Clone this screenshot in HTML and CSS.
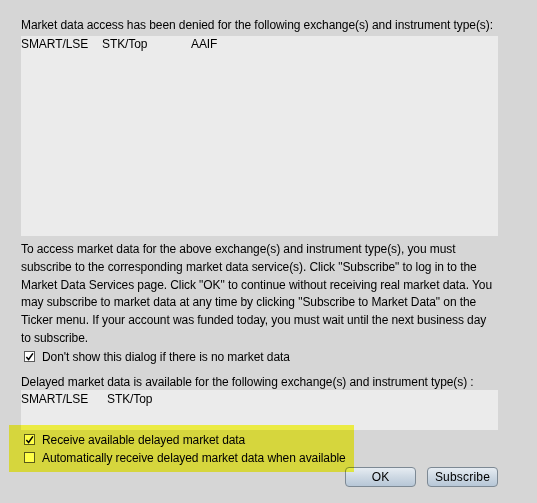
FILE: index.html
```html
<!DOCTYPE html>
<html>
<head>
<meta charset="utf-8">
<link rel="stylesheet" href="styles.css">
</head>
<body>
<div class="dialog">
  <div class="title">Market data access has been denied for the following exchange(s) and instrument type(s):</div>
  <div class="list list-denied">
    <div class="row row3"><span>SMART/LSE</span><span>STK/Top</span><span>AAIF</span></div>
  </div>
  <p class="info">To access market data for the above exchange(s) and instrument type(s), you must<br>subscribe to the corresponding market data service(s). Click "Subscribe" to log in to the<br>Market Data Services page. Click "OK" to continue without receiving real market data. You<br>may subscribe to market data at any time by clicking "Subscribe to Market Data" on the<br>Ticker menu. If your account was funded today, you must wait until the next business day<br>to subscribe.</p>
  <label class="check"><span class="box"><svg viewBox="0 0 10 10" width="10" height="10"><path d="M1.5 5 L4 7.8 L8.8 1" fill="none" stroke="#000" stroke-width="1.7"/></svg></span>Don't show this dialog if there is no market data</label>
  <div class="subtitle">Delayed market data is available for the following exchange(s) and instrument type(s) :</div>
  <div class="list list-delayed">
    <div class="row row2"><span>SMART/LSE</span><span>STK/Top</span></div>
  </div>
  <div class="delayed-opts">
    <label class="check"><span class="box"><svg viewBox="0 0 10 10" width="10" height="10"><path d="M1.5 5 L4 7.8 L8.8 1" fill="none" stroke="#000" stroke-width="1.7"/></svg></span>Receive available delayed market data</label>
    <label class="check"><span class="box"></span>Automatically receive delayed market data when available</label>
  </div>
  <div class="buttons">
    <button class="btn">OK</button>
    <button class="btn">Subscribe</button>
  </div>
  <div class="highlight"></div>
</div>
</body>
</html>
```
FILE: styles.css
```css
html, body {
  margin: 0;
  padding: 0;
  background: #d6d6d6;
}
body {
  font-family: "Liberation Sans", Arial, sans-serif;
  font-size: 12px;
  letter-spacing: -0.08px;
  color: #000;
}
.dialog {
  position: relative;
  width: 537px;
  height: 503px;
  box-sizing: border-box;
  padding: 16px 39px 0 21px;
}
.title {
  line-height: 18px;
  margin-bottom: 2px;
  white-space: nowrap;
}
.list {
  background: #ebebeb;
}
.list-denied {
  height: 200px;
}
.list-delayed {
  height: 39px;
  padding-top: 1px;
}
.row {
  display: grid;
  line-height: 16px;
}
.row3 {
  grid-template-columns: 81px 89px auto;
}
.row2 {
  grid-template-columns: 86px auto;
}
.info {
  margin: 5px 0 0;
  line-height: 17.8px;
  white-space: nowrap;
}
.check {
  display: flex;
  align-items: center;
  height: 18px;
  padding-left: 3px;
  white-space: nowrap;
}
.box {
  width: 9px;
  height: 9px;
  border: 1px solid #5a5a5a;
  background: #fff;
  margin-right: 7px;
  display: flex;
  align-items: center;
  justify-content: center;
}
.box svg {
  display: block;
}
.subtitle {
  margin-top: 8px;
  line-height: 16px;
  white-space: nowrap;
}
.delayed-opts {
  margin-top: 1px;
}
.buttons {
  display: flex;
  justify-content: flex-end;
  gap: 11px;
}
.btn {
  width: 71px;
  height: 20px;
  box-sizing: border-box;
  border: 1px solid #7d8994;
  border-radius: 4px;
  background: linear-gradient(#e6ecf2, #cdd8e3 50%, #b7c7d7);
  font-family: "Liberation Sans", Arial, sans-serif;
  font-size: 12px;
  letter-spacing: 0.2px;
  color: #000;
  padding: 0;
  line-height: 18px;
}
.highlight {
  position: absolute;
  left: 9px;
  top: 425px;
  width: 345px;
  height: 47px;
  background: #ffff48;
  mix-blend-mode: multiply;
  pointer-events: none;
}
```
